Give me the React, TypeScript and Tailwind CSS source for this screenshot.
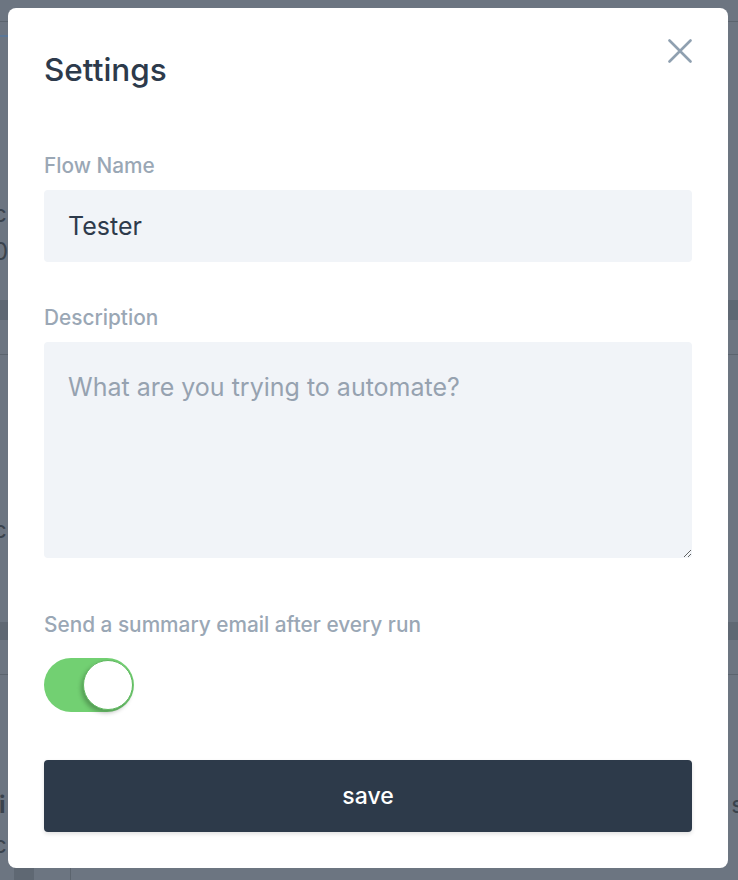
import React from "react";

function Line() {
  return <div className="h-px w-full bg-[#5b646e]" />;
}

function EdgeRow({ left, right, h, bold }: { left?: string; right?: string; h: string; bold?: boolean }) {
  return (
    <div className={`flex items-center justify-between text-[#3a434d] ${h}`}>
      <span className={`text-[24px] ${bold ? "-ml-[1px] font-bold" : "-ml-[7px]"}`}>{left}</span>
      <span className="-mr-[6px] text-[24px]">{right}</span>
    </div>
  );
}

export default function App() {
  return (
    <div
      className="relative w-[738px] h-[880px] overflow-hidden bg-[#6c7581]"
      style={{ fontFamily: "Inter, 'Noto Sans', sans-serif" }}
    >
      {/* faint background page behind the overlay */}
      <div className="flex h-full flex-col">
        <div className="h-[21px]" />
        <Line />
        <div className="h-[13px]" />
        <div className="h-[2px] w-[8px] bg-[#5a7696]" />
        <div className="h-[158px]" />
        <EdgeRow left="c" h="h-[38px]" />
        <EdgeRow left="0" h="h-[38px]" />
        <div className="h-[29px]" />
        <div className="h-[20px] bg-[#5f6873]" />
        <div className="h-[34px]" />
        <Line />
        <div className="h-[159px]" />
        <EdgeRow left="c" h="h-[32px]" />
        <div className="h-[76px]" />
        <div className="h-[18px] bg-[#5f6873]" />
        <div className="h-[34px]" />
        <Line />
        <div className="h-[112px]" />
        <EdgeRow left="i" right="s" h="h-[36px]" bold />
        <div className="h-[6px]" />
        <EdgeRow left="c" h="h-[32px]" />
        <div className="flex flex-1 items-stretch pl-[14px]">
          <div className="w-[20px] bg-[#5f6873]" />
          <div className="ml-[36px] w-px bg-[#5b646e]" />
        </div>
      </div>

      {/* modal overlay */}
      <div className="absolute left-[8px] top-[8px] flex h-[860px] w-[720px] flex-col rounded-[8px] bg-white px-[36px] pt-[44px] pb-[36px]">
        <div className="flex items-start justify-between">
          <h1 className="text-[31.5px] leading-[36px] font-medium text-[#2d3a4b]">Settings</h1>
          <button className="-mt-[13px] flex h-[24px] w-[24px] items-center justify-center">
            <svg width="24" height="24" viewBox="0 0 24 24" fill="none">
              <path d="M1.5 1.5 L22.5 22.5 M22.5 1.5 L1.5 22.5" stroke="#8fa0b0" strokeWidth="2.6" strokeLinecap="round" />
            </svg>
          </button>
        </div>

        <label className="mt-[64px] text-[20.8px] leading-[28px] font-medium text-[#9aa7b5]">Flow Name</label>
        <input
          defaultValue="Tester"
          className="mt-[10px] h-[72px] w-full rounded-[4px] bg-[#f1f4f8] px-[24px] text-[25px] text-[#2d3a4b] outline-none"
        />

        <label className="mt-[42px] text-[20.8px] leading-[28px] font-medium text-[#9aa7b5]">Description</label>
        <textarea
          placeholder="What are you trying to automate?"
          className="mt-[10px] h-[216px] w-full rounded-[4px] bg-[#f1f4f8] px-[24px] py-[28px] text-[25px] leading-[34px] text-[#2d3a4b] placeholder:text-[#96a2b0] outline-none"
        />

        <label className="mt-[53px] text-[20.8px] leading-[28px] font-medium text-[#9aa7b5]">
          Send a summary email after every run
        </label>
        <div className="mt-[19px] flex h-[54px] w-[90px] items-center justify-end rounded-full bg-[#72d072] pr-[1px]">
          <div className="h-[50px] w-[50px] rounded-full border-[1.5px] border-[#5fb85f] bg-white shadow-[-2px_3px_4px_rgba(0,0,0,0.25)]" />
        </div>

        <button className="mt-[48px] h-[72px] w-full rounded-[4px] bg-[#2d3a4a] text-[23px] font-medium text-white shadow-[0_2px_4px_rgba(0,0,0,0.12)]">
          save
        </button>
      </div>
    </div>
  );
}
